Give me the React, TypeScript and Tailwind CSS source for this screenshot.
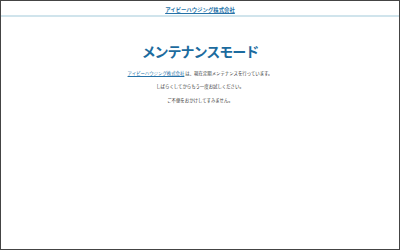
const jp = { fontFamily: '"Noto Sans CJK JP", "Noto Sans", sans-serif' }

const lines = [
  "しばらくしてからもう一度お試しください。",
  "ご不便をおかけしてすみません。",
]

export default function App() {
  return (
    <div style={jp} className="w-[400px] h-[250px] bg-white border border-[#444] flex flex-col">
      <header className="h-[16px] flex items-end justify-center pb-[2px] border-b-2 border-[#d0e4ec]">
        <a href="#" className="text-[5.4px] font-bold text-[#2572a8] underline leading-none">
          アイビーハウジング株式会社
        </a>
      </header>
      <main className="flex flex-col items-center pt-[27px] text-[#333]">
        <h1 className="text-[14px] font-bold text-[#1c6b9e] leading-none tracking-[-1px]">
          メンテナンスモード
        </h1>
        <p className="mt-[13px] text-[4.4px] leading-none">
          <a href="#" className="text-[#2572a8] underline">アイビーハウジング株式会社</a> は、現在定期メンテナンスを行っています。
        </p>
        {lines.map((line) => (
          <p key={line} className="mt-[9px] text-[4.4px] leading-none">{line}</p>
        ))}
      </main>
    </div>
  )
}
